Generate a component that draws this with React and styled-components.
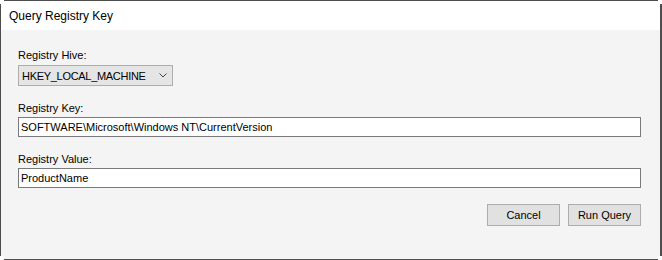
import React from 'react';
import styled, { createGlobalStyle } from 'styled-components';

const GlobalStyle = createGlobalStyle`
  html, body {
    margin: 0;
    padding: 0;
    background: #ffffff;
  }
  * {
    box-sizing: border-box;
  }
`;

const Window = styled.div`
  width: 662px;
  height: 260px;
  display: flex;
  flex-direction: column;
  border: 1px solid #4d4d4d;
  border-right-width: 2px;
  background: #f4f4f4;
  font-family: "Liberation Sans", Arial, sans-serif;
  color: #000000;
  clip-path: polygon(
    4px 0, calc(100% - 4px) 0, calc(100% - 4px) 4px, 100% 4px,
    100% calc(100% - 4px), calc(100% - 4px) calc(100% - 4px),
    calc(100% - 4px) 100%, 4px 100%, 4px calc(100% - 4px),
    0 calc(100% - 4px), 0 4px, 4px 4px
  );
`;

const TitleBar = styled.div`
  height: 29px;
  flex-shrink: 0;
  display: flex;
  align-items: center;
  padding-left: 8px;
  background: #ffffff;
  font-size: 12px;
`;

const Body = styled.div`
  flex: 1;
  display: flex;
  flex-direction: column;
  gap: 16px;
  padding: 19px 19px 0 17px;
`;

const Field = styled.div`
  display: flex;
  flex-direction: column;
  align-items: flex-start;
  gap: ${(p) => p.$gap || 2}px;
`;

const Label = styled.label`
  font-size: 11px;
  line-height: 13px;
`;

const ComboBox = styled.div`
  width: 155px;
  height: 21px;
  display: flex;
  align-items: center;
  justify-content: space-between;
  padding: 0 5px 0 3px;
  background: #e5e5e5;
  border: 1px solid #adadad;
  font-size: 11px;
  letter-spacing: -0.3px;
`;

const TextInput = styled.input`
  width: 100%;
  height: 20px;
  padding: 0 2px;
  border: 1px solid #7a7a7a;
  background: #ffffff;
  font-family: "Liberation Sans", Arial, sans-serif;
  font-size: 11px;
  color: #000000;
  outline: none;
`;

const ButtonRow = styled.div`
  display: flex;
  justify-content: flex-end;
  gap: 8px;
`;

const Button = styled.button`
  width: 73px;
  height: 22px;
  padding: 0;
  background: #e1e1e1;
  border: 1px solid #adadad;
  font-family: "Liberation Sans", Arial, sans-serif;
  font-size: 11px;
  color: #000000;
`;

const Chevron = () => (
  <svg width="8" height="5" viewBox="0 0 8 5">
    <path d="M0.5 0.5 L4 4 L7.5 0.5" fill="none" stroke="#444" strokeWidth="1" />
  </svg>
);

export default function App() {
  return (
    <>
      <GlobalStyle />
      <Window>
        <TitleBar>Query Registry Key</TitleBar>
        <Body>
          <Field $gap={3}>
            <Label>Registry Hive:</Label>
            <ComboBox>
              <span>HKEY_LOCAL_MACHINE</span>
              <Chevron />
            </ComboBox>
          </Field>
          <Field>
            <Label>Registry Key:</Label>
            <TextInput defaultValue="SOFTWARE\Microsoft\Windows NT\CurrentVersion" />
          </Field>
          <Field>
            <Label>Registry Value:</Label>
            <TextInput defaultValue="ProductName" />
          </Field>
          <ButtonRow>
            <Button>Cancel</Button>
            <Button>Run Query</Button>
          </ButtonRow>
        </Body>
      </Window>
    </>
  );
}
